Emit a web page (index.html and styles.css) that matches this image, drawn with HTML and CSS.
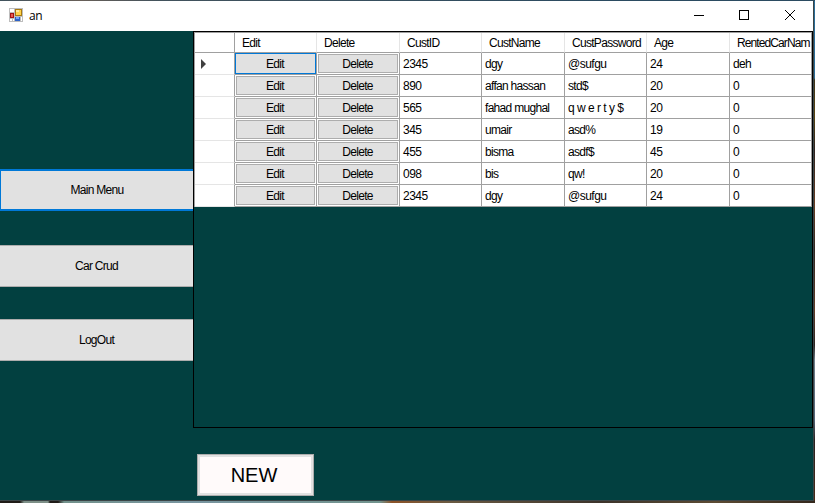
FILE: index.html
```html
<!DOCTYPE html>
<html lang="en">
<head>
<meta charset="utf-8">
<title>an</title>
<link rel="stylesheet" href="styles.css">
</head>
<body>
<div class="desktop">
<div class="window">
  <header class="titlebar">
    <svg class="app-icon" width="14" height="14" viewBox="0 0 14 14" shape-rendering="crispEdges">
      <path fill="#bdbdbd" d="M0 0h14v14H0z"/>
      <path fill="#fff" d="M1 1h4v3H1zM1 11h2v2H1zM4 11h1v2H4zM12 9h1v4h-1z"/>
      <path fill="#a87a10" d="M6 1h7v7H6z"/><path fill="#ffd34a" d="M7 2h5v5H7z"/><path fill="#ffe9a0" d="M7 2h3v2H7z"/>
      <path fill="#a31414" d="M1 5h4v5H1z"/><path fill="#e85a50" d="M2 6h2v3H2z"/>
      <path fill="#2c62c8" d="M6 9h5v4H6z"/><path fill="#79a8f5" d="M7 9h3v2H7z"/>
    </svg>
    <span class="title">an</span>
    <svg class="controls" width="104" height="12" viewBox="0 0 104 12" fill="none" stroke="#000">
      <path d="M0 5.5h10M45.500 .5h9v9h-9z" shape-rendering="crispEdges"/>
      <path d="M91 0l10 10M101 0L91 10"/>
    </svg>
  </header>
  <div class="client">
    <nav class="side">
      <button class="nav active">Main Menu</button>
      <button class="nav">Car Crud</button>
      <button class="nav">LogOut</button>
    </nav>
    <main>
      <div class="view">
        <div class="grid">
          <div class="h corner"></div><div class="h">Edit</div><div class="h">Delete</div><div class="h">CustID</div><div class="h">CustName</div><div class="h">CustPassword</div><div class="h">Age</div><div class="h last">RentedCarNam</div>
          <div class="r"><svg width="5" height="10" viewBox="0 0 5 10"><path fill="#404040" d="M0 0l5 5-5 5z"/></svg></div><div class="b"><button class="cur">Edit</button></div><div class="b"><button>Delete</button></div><div class="c num">2345</div><div class="c">dgy</div><div class="c wide">@sufgu</div><div class="c num">24</div><div class="c">deh</div>
          <div class="r"></div><div class="b"><button>Edit</button></div><div class="b"><button>Delete</button></div><div class="c num">890</div><div class="c">affan hassan</div><div class="c">std$</div><div class="c num">20</div><div class="c num">0</div>
          <div class="r"></div><div class="b"><button>Edit</button></div><div class="b"><button>Delete</button></div><div class="c num">565</div><div class="c">fahad mughal</div><div class="c wide">q w e r t y $</div><div class="c num">20</div><div class="c num">0</div>
          <div class="r"></div><div class="b"><button>Edit</button></div><div class="b"><button>Delete</button></div><div class="c num">345</div><div class="c">umair</div><div class="c">asd%</div><div class="c num">19</div><div class="c num">0</div>
          <div class="r"></div><div class="b"><button>Edit</button></div><div class="b"><button>Delete</button></div><div class="c num">455</div><div class="c">bisma</div><div class="c">asdf$</div><div class="c num">45</div><div class="c num">0</div>
          <div class="r"></div><div class="b"><button>Edit</button></div><div class="b"><button>Delete</button></div><div class="c num">098</div><div class="c">bis</div><div class="c">qw!</div><div class="c num">20</div><div class="c num">0</div>
          <div class="r"></div><div class="b"><button>Edit</button></div><div class="b"><button>Delete</button></div><div class="c num">2345</div><div class="c">dgy</div><div class="c wide">@sufgu</div><div class="c num">24</div><div class="c num">0</div>
        </div>
      </div>
      <button class="new">NEW</button>
    </main>
  </div>
</div>
</div>
</body>
</html>
```
FILE: styles.css
```css
* { box-sizing: border-box; }
body { margin: 0; overflow: hidden; font: 12px/14px "Liberation Sans", Arial, sans-serif; letter-spacing: -0.7px; color: #000; }
button { font: inherit; letter-spacing: inherit; color: #000; padding: 0; border-radius: 0; display: block; }
.desktop {
  width: 815px; height: 503px; padding: 1px 2px 3px 0;
  background:
    linear-gradient(90deg, #201c18 0 20px, #7d8f87 24px 48px, #201c18 50px 58px, #72918b 64px, #7895a0 190px, #71938d 380px, #8c5328 392px, #6a5a42 450px, #3d342b 600px, #5c4b33 715px, #34281d) 0 501px / 815px 2px no-repeat,
    linear-gradient(90deg, #40525d, #685f58 80px, #42525c 160px, #2b4b61 600px) 0 0 / 815px 1px no-repeat,
    linear-gradient(#2b6d98 0 78px, #40351a 80px, #5b4710 115px, #302420 150px, #6b3f22 205px, #302722 250px, #633d27 310px, #2c2422 345px, #71808c 360px, #54657a 420px, #2a2220 440px, #4b2c18) 814px 0 / 1px 503px no-repeat,
    #3a4547;
}
.window { height: 499px; display: flex; flex-direction: column; background: #024040; }
.titlebar { height: 30px; display: flex; align-items: flex-start; background: #fff; }
.app-icon { margin: 7px 0 0 9px; }
.title { font: 12px/14px "Open Sans", sans-serif; letter-spacing: -0.4px; margin: 8px 0 0 6px; }
.controls { margin: 9px 15px 0 auto; }
.client { flex: 1; display: flex; }
.side { width: 193px; padding-top: 138px; }
.nav { width: 193px; height: 42px; margin-bottom: 33px; border: solid #adadad; border-width: 1px 0; background: #e1e1e1; text-align: center; }
.nav.active { border: solid #0078d7; border-width: 2px 0 2px 1px; margin-bottom: 34px; }
.nav + .nav + .nav { margin-top: -1px; }
.view { width: 620px; height: 397px; border: 1px solid #000; }
.grid {
  display: grid; width: 618px; overflow: hidden;
  grid-template-columns: 40px 82px 83px 82px 83px 82px 83px 82px;
  grid-template-rows: 20px repeat(7, 22px);
  border: solid #a0a0a0; border-width: 1px 0 0 1px; background: #fff;
}
.h { border-right: 1px solid #e5e5e5; border-bottom: 1px solid #a0a0a0; padding: 3px 0 0 7px; white-space: nowrap; }
.h.corner { border-right-color: #a0a0a0; }
.h.last { letter-spacing: -0.9px; border-right-color: #a0a0a0; }
.r { border-right: 1px solid #a0a0a0; border-bottom: 1px solid #e5e5e5; padding: 6px 0 0 6px; }
.r svg { display: block; }
.b, .c { border-right: 1px solid #a0a0a0; border-bottom: 1px solid #a0a0a0; }
.b { padding: 1px; }
.b button { width: 100%; height: 100%; border: 1px solid #adadad; background: #e1e1e1; line-height: 15px; padding: 2px 1px 0 0; }
.b button.cur { border-color: #e1e1e1; outline: 1px solid #0078d7; }
.c { padding: 4px 0 0 3px; white-space: nowrap; }
.c.num, .c.wide { letter-spacing: -0.5px; }
.new { width: 117px; height: 42px; margin: 26px 0 0 4px; border: 1px solid #adadad; box-shadow: inset 0 0 0 2px #e1e1e1; background: #fffafa; font: 20px/38px "Liberation Sans", sans-serif; letter-spacing: 0; padding-right: 3px; }
```
